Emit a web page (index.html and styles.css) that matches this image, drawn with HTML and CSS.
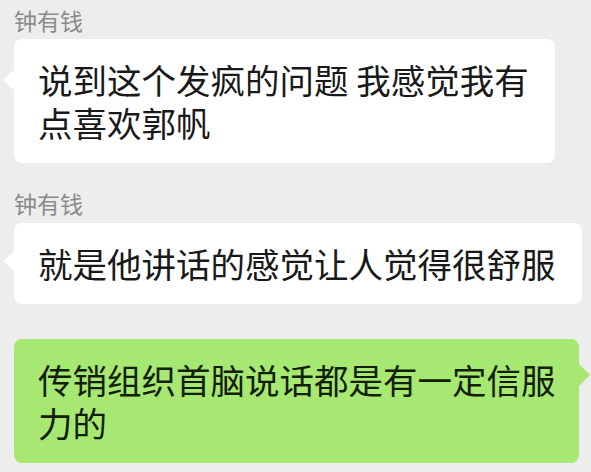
FILE: index.html
```html
<!DOCTYPE html>
<html lang="zh">
<head>
<meta charset="utf-8">
<link rel="stylesheet" href="styles.css">
</head>
<body>
<div class="chat">
  <div class="name">钟有钱</div>
  <div class="bubble in first">说到这个发疯的问题 我感觉我有<br>点喜欢郭帆</div>
  <div class="name second">钟有钱</div>
  <div class="bubble in">就是他讲话的感觉让人觉得很舒服</div>
  <div class="bubble out">传销组织首脑说话都是有一定信服<br>力的</div>
</div>
</body>
</html>
```
FILE: styles.css
```css
html, body {
  margin: 0;
  padding: 0;
  background: #ededed;
}
body {
  width: 591px;
  height: 472px;
  overflow: hidden;
  font-family: "Noto Sans CJK SC", "Noto Sans", sans-serif;
}
.chat {
  display: flex;
  flex-direction: column;
  align-items: flex-start;
  padding: 8px 10px 0 14px;
}
.name {
  font-size: 23px;
  line-height: 24px;
  color: #8a8a8a;
  margin-bottom: 7px;
}
.name.second {
  margin-top: 28px;
  margin-bottom: 8px;
}
.bubble {
  position: relative;
  box-sizing: border-box;
  max-width: 570px;
  padding: 19px 26px 19px 24px;
  font-size: 34.5px;
  line-height: 43px;
  color: #191919;
  border-radius: 8px;
  white-space: nowrap;
}
.bubble.in {
  background: #ffffff;
}
.bubble.in::before {
  content: "";
  position: absolute;
  left: -11px;
  top: 28px;
  border-style: solid;
  border-width: 10px 11px 10px 0;
  border-color: transparent #ffffff transparent transparent;
}
.bubble.first::before {
  top: 31px;
}
.bubble.out {
  align-self: stretch;
  margin-top: 35px;
  margin-right: 2px;
  background: #a7e873;
  color: #12200a;
}
.bubble.out::after {
  content: "";
  position: absolute;
  right: -11px;
  top: 25px;
  border-style: solid;
  border-width: 11px 0 11px 11px;
  border-color: transparent transparent transparent #a7e873;
}
```
